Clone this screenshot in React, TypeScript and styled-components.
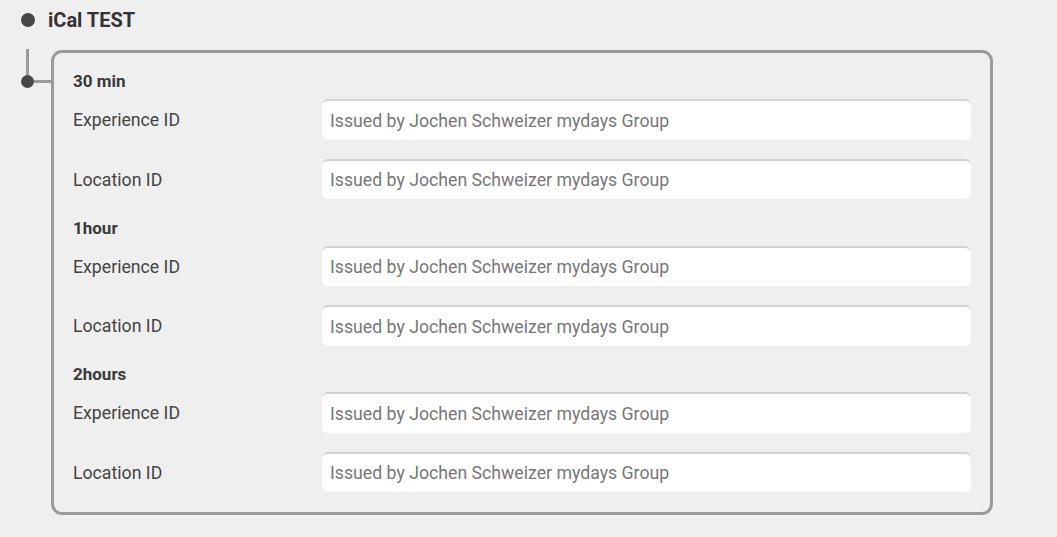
import React from 'react';
import styled, { createGlobalStyle } from 'styled-components';

const GlobalStyle = createGlobalStyle`
  html, body {
    margin: 0;
    padding: 0;
    background: #efefef;
    font-family: Roboto, 'Liberation Sans', sans-serif;
    color: #404040;
  }
`;

const Page = styled.div`
  width: 1057px;
  height: 537px;
  overflow: hidden;
  background: #efefef;
`;

const Header = styled.div`
  display: flex;
  align-items: center;
  gap: 13px;
  padding: 10px 0 0 21px;
  height: 20px;
`;

const Bullet = styled.span<{ size: number }>`
  display: block;
  flex: none;
  width: ${(p) => p.size}px;
  height: ${(p) => p.size}px;
  border-radius: 50%;
  background: #474747;
`;

const Title = styled.h1`
  margin: 0;
  font-size: 20px;
  font-weight: 700;
  line-height: 20px;
  color: #333;
`;

const Body = styled.div`
  display: flex;
  padding: 20px 0 0 21px;
`;

const Tree = styled.div`
  display: flex;
  flex-direction: column;
  width: 30px;
  flex: none;
`;

const Stem = styled.div`
  width: 3px;
  height: 26px;
  margin: -1px 0 0 5px;
  background: #9a9a9a;
`;

const Branch = styled.div`
  display: flex;
  align-items: center;
`;

const Twig = styled.div`
  flex: 1;
  height: 3px;
  background: #9a9a9a;
`;

const Panel = styled.div`
  width: 942px;
  box-sizing: border-box;
  border: 3px solid #9a9a9a;
  border-radius: 11px;
  padding: 18px 19px 20px 19px;
  display: flex;
  flex-direction: column;
`;

const Section = styled.section`
  display: flex;
  flex-direction: column;
  & + & {
    margin-top: 18.5px;
  }
`;

const SectionTitle = styled.h2`
  margin: 0 0 8px;
  font-size: 17px;
  font-weight: 700;
  line-height: 20px;
  color: #3a3a3a;
`;

const Row = styled.div`
  display: grid;
  grid-template-columns: 249px 1fr;
  align-items: center;
  & + & {
    margin-top: 19px;
  }
`;

const Label = styled.label`
  font-size: 17.7px;
  line-height: 22px;
  padding-top: 2px;
  color: #444;
`;

const Field = styled.input`
  height: 40.5px;
  box-sizing: border-box;
  border: none;
  border-top: 2px solid #d2d2d2;
  border-radius: 6px;
  background: #fff;
  padding: 1px 8px 0;
  font-family: Roboto, 'Liberation Sans', sans-serif;
  font-size: 17.7px;
  outline: none;
  &::placeholder {
    color: #777;
  }
`;

const sections = ['30 min', '1hour', '2hours'];
const fields = ['Experience ID', 'Location ID'];

export default function App() {
  return (
    <Page>
      <GlobalStyle />
      <Header>
        <Bullet size={14} />
        <Title>iCal TEST</Title>
      </Header>
      <Body>
        <Tree>
          <Stem />
          <Branch>
            <Bullet size={13} />
            <Twig />
          </Branch>
        </Tree>
        <Panel>
          {sections.map((s) => (
            <Section key={s}>
              <SectionTitle>{s}</SectionTitle>
              {fields.map((f) => (
                <Row key={f}>
                  <Label>{f}</Label>
                  <Field placeholder="Issued by Jochen Schweizer mydays Group" />
                </Row>
              ))}
            </Section>
          ))}
        </Panel>
      </Body>
    </Page>
  );
}
